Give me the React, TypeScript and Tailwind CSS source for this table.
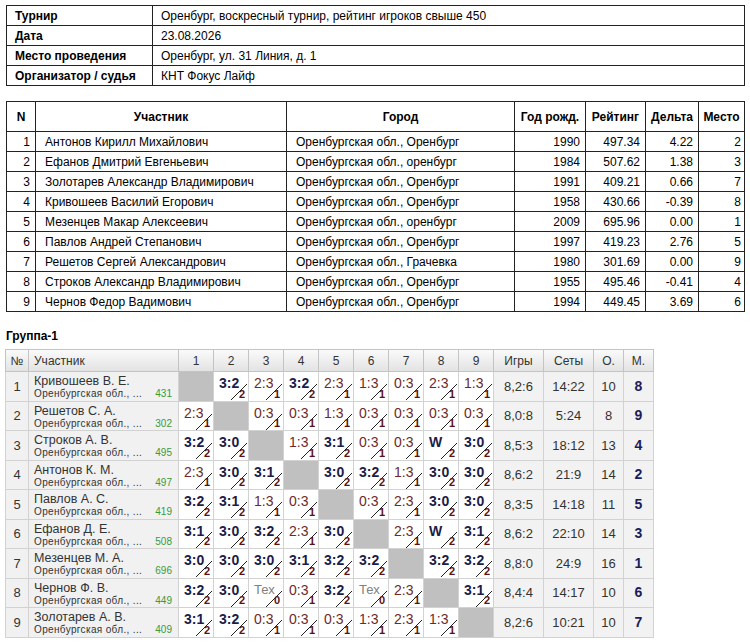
const info = [
  ['Турнир', 'Оренбург, воскресный турнир, рейтинг игроков свыше 450'],
  ['Дата', '23.08.2026'],
  ['Место проведения', 'Оренбург, ул. 31 Линия, д. 1'],
  ['Организатор / судья', 'КНТ Фокус Лайф'],
];

const players = [
  [1, 'Антонов Кирилл Михайлович', 'Оренбургская обл., Оренбург', 1990, '497.34', '4.22', 2],
  [2, 'Ефанов Дмитрий Евгеньевич', 'Оренбургская обл., оренбург', 1984, '507.62', '1.38', 3],
  [3, 'Золотарев Александр Владимирович', 'Оренбургская обл., Оренбург', 1991, '409.21', '0.66', 7],
  [4, 'Кривошеев Василий Егорович', 'Оренбургская обл., Оренбург', 1958, '430.66', '-0.39', 8],
  [5, 'Мезенцев Макар Алексеевич', 'Оренбургская обл., оренбург', 2009, '695.96', '0.00', 1],
  [6, 'Павлов Андрей Степанович', 'Оренбургская обл., Оренбург', 1997, '419.23', '2.76', 5],
  [7, 'Решетов Сергей Александрович', 'Оренбургская обл., Грачевка', 1980, '301.69', '0.00', 9],
  [8, 'Строков Александр Владимирович', 'Оренбургская обл., Оренбург', 1955, '495.46', '-0.41', 4],
  [9, 'Чернов Федор Вадимович', 'Оренбургская обл., Оренбург', 1994, '449.45', '3.69', 6],
];

const group = [
  { name: 'Кривошеев В. Е.', r: 431, res: ['', '3:2', '2:3', '3:2', '2:3', '1:3', '0:3', '2:3', '1:3'], g: '8,2:6', s: '14:22', o: 10, m: 8 },
  { name: 'Решетов С. А.', r: 302, res: ['2:3', '', '0:3', '0:3', '1:3', '0:3', '0:3', '0:3', '0:3'], g: '8,0:8', s: '5:24', o: 8, m: 9 },
  { name: 'Строков А. В.', r: 495, res: ['3:2', '3:0', '', '1:3', '3:1', '0:3', '0:3', 'W', '3:0'], g: '8,5:3', s: '18:12', o: 13, m: 4 },
  { name: 'Антонов К. М.', r: 497, res: ['2:3', '3:0', '3:1', '', '3:0', '3:2', '1:3', '3:0', '3:0'], g: '8,6:2', s: '21:9', o: 14, m: 2 },
  { name: 'Павлов А. С.', r: 419, res: ['3:2', '3:1', '1:3', '0:3', '', '0:3', '2:3', '3:0', '3:0'], g: '8,3:5', s: '14:18', o: 11, m: 5 },
  { name: 'Ефанов Д. Е.', r: 508, res: ['3:1', '3:0', '3:2', '2:3', '3:0', '', '2:3', 'W', '3:1'], g: '8,6:2', s: '22:10', o: 14, m: 3 },
  { name: 'Мезенцев М. А.', r: 696, res: ['3:0', '3:0', '3:0', '3:1', '3:2', '3:2', '', '3:2', '3:2'], g: '8,8:0', s: '24:9', o: 16, m: 1 },
  { name: 'Чернов Ф. В.', r: 449, res: ['3:2', '3:0', 'Тех', '0:3', '3:2', 'Тех', '2:3', '', '3:1'], g: '8,4:4', s: '14:17', o: 10, m: 6 },
  { name: 'Золотарев А. В.', r: 409, res: ['3:1', '3:2', '0:3', '0:3', '0:3', '1:3', '2:3', '1:3', ''], g: '8,2:6', s: '10:21', o: 10, m: 7 },
];

const font = { fontFamily: '"Liberation Sans", Arial, sans-serif' };

function Score({ v }: { v: string }) {
  if (!v) return <td className="border border-[#d2d2d2] bg-[#c0c0c0] p-0" />;
  const tech = v === 'Тех';
  const win = v === 'W' || (!tech && Number(v[0]) > Number(v[2]));
  const pts = tech ? 0 : win ? 2 : 1;
  const color = tech ? 'text-[13px] text-[#808080]' : win ? 'text-[14px] font-bold text-[#1c1c48]' : 'text-[14px] text-[#6e2a2a]';
  return (
    <td className="relative border border-[#d2d2d2] bg-white p-0 align-top">
      <div className={`pl-[5px] pt-[3px] leading-[16px] ${color}`}>{v}</div>
      <svg className="absolute left-0 top-0" width="35" height="29" viewBox="0 0 35 29">
        <line x1="17" y1="28" x2="33" y2="12" stroke="#222" strokeWidth="1" />
      </svg>
      <span className="absolute bottom-[1px] right-[3px] text-[11px] font-bold leading-[11px] text-[#5c1212]">
        {pts}
      </span>
    </td>
  );
}

export default function App() {
  return (
    <div className="w-[750px] bg-white px-[6px] pt-[5px] text-[12px] text-black" style={font}>
      <table className="w-[739px] table-fixed border-collapse">
        <colgroup>
          <col className="w-[146px]" />
          <col />
        </colgroup>
        <tbody>
          {info.map(([k, v]) => (
            <tr key={k} className="h-[20px]">
              <td className="border border-[#222] pl-[8px] font-bold">{k}</td>
              <td className="border border-[#222] pl-[8px]">{v}</td>
            </tr>
          ))}
        </tbody>
      </table>

      <table className="mt-[15px] w-[739px] table-fixed border-collapse">
        <colgroup>
          <col className="w-[29px]" />
          <col className="w-[251px]" />
          <col className="w-[228px]" />
          <col className="w-[71px]" />
          <col className="w-[60px]" />
          <col className="w-[53px]" />
          <col />
        </colgroup>
        <thead>
          <tr className="h-[30px] font-bold">
            <th className="border border-[#222]">N</th>
            <th className="border border-[#222]">Участник</th>
            <th className="border border-[#222]">Город</th>
            <th className="border border-[#222]">Год рожд.</th>
            <th className="border border-[#222]">Рейтинг</th>
            <th className="border border-[#222]">Дельта</th>
            <th className="border border-[#222]">Место</th>
          </tr>
        </thead>
        <tbody>
          {players.map((p) => (
            <tr key={p[0]} className="h-[20px]">
              <td className="border border-[#222] pr-[5px] text-right">{p[0]}</td>
              <td className="border border-[#222] pl-[9px]">{p[1]}</td>
              <td className="border border-[#222] pl-[9px]">{p[2]}</td>
              <td className="border border-[#222] pr-[5px] text-right">{p[3]}</td>
              <td className="border border-[#222] pr-[5px] text-right">{p[4]}</td>
              <td className="border border-[#222] pr-[5px] text-right">{p[5]}</td>
              <td className="border border-[#222] pr-[3px] text-right">{p[6]}</td>
            </tr>
          ))}
        </tbody>
      </table>

      <div className="mt-[17px] font-bold leading-[14px]">Группа-1</div>

      <table className="-ml-[1px] mt-[6px] w-[648px] table-fixed border-collapse text-[#333]">
        <colgroup>
          <col className="w-[23px]" />
          <col className="w-[150px]" />
          {Array.from({ length: 9 }, (_, i) => (
            <col key={i} className="w-[35px]" />
          ))}
          <col className="w-[50px]" />
          <col className="w-[50px]" />
          <col className="w-[30px]" />
          <col className="w-[30px]" />
        </colgroup>
        <thead>
          <tr className="h-[22px] bg-gradient-to-b from-[#fafafa] to-[#e2e2e2] text-[12px]">
            <th className="border border-[#c4c4c4] p-0 font-normal">№</th>
            <th className="border border-[#c4c4c4] p-0 pl-[5px] text-left font-normal">Участник</th>
            {Array.from({ length: 9 }, (_, i) => (
              <th key={i} className="border border-[#c4c4c4] p-0 font-normal">
                {i + 1}
              </th>
            ))}
            <th className="border border-[#c4c4c4] p-0 font-normal">Игры</th>
            <th className="border border-[#c4c4c4] p-0 font-normal">Сеты</th>
            <th className="border border-[#c4c4c4] p-0 font-normal">О.</th>
            <th className="border border-[#c4c4c4] p-0 font-normal">М.</th>
          </tr>
        </thead>
        <tbody className="border-b border-[#999]">
          {group.map((row, i) => (
            <tr key={row.name} className="h-[29.5px]">
              <td className="border border-[#d2d2d2] bg-[#f1f1f1] p-0 text-center text-[13px]">{i + 1}</td>
              <td className="border border-[#d2d2d2] bg-[#f1f1f1] px-[5px] py-0 align-top">
                <div className="pt-[2px] text-[12.5px] leading-[14px]">{row.name}</div>
                <div className="flex items-end justify-between pr-[1px] pt-[1px] text-[10px] leading-[10px]">
                  <span className="tracking-[0.35px]">Оренбургская обл., ...</span>
                  <span className="text-[#3a9a3a]">{row.r}</span>
                </div>
              </td>
              {row.res.map((v, j) => (
                <Score key={j} v={v} />
              ))}
              <td className="border border-[#d2d2d2] bg-[#f2f2f2] p-0 text-center text-[13px]">{row.g}</td>
              <td className="border border-[#d2d2d2] bg-[#f2f2f2] p-0 text-center text-[13px]">{row.s}</td>
              <td className="border border-[#d2d2d2] bg-[#f2f2f2] p-0 text-center text-[13px]">{row.o}</td>
              <td className="border border-[#d2d2d2] bg-[#f2f2f2] p-0 text-center text-[14px] font-bold text-[#1c1c5a]">
                {row.m}
              </td>
            </tr>
          ))}
        </tbody>
      </table>
    </div>
  );
}
